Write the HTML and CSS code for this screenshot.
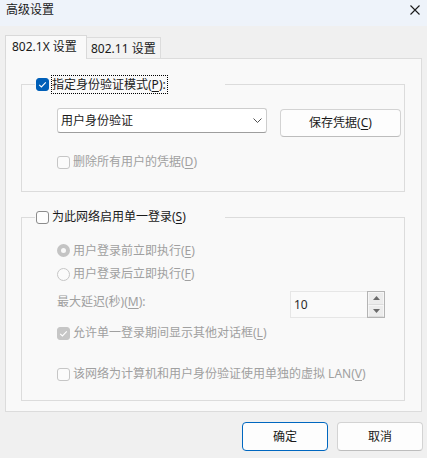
FILE: index.html
```html
<!DOCTYPE html>
<html lang="zh-CN">
<head>
<meta charset="utf-8">
<title>高级设置</title>
<link rel="stylesheet" href="styles.css">
</head>
<body>
<div class="titlebar">
  <span class="title">高级设置</span>
  <svg class="close" width="10" height="10" viewBox="0 0 10 10"><path d="M0.5 0.5L9.5 9.5M9.5 0.5L0.5 9.5" stroke="#1a1a1a" stroke-width="1.1" fill="none"/></svg>
</div>
<div class="body">
  <div class="tabs">
    <div class="tab tab-active">802.1X 设置</div>
    <div class="tab tab-other">802.11 设置</div>
  </div>
  <div class="panel">
    <fieldset class="group group-auth">
      <legend class="legend">
        <span class="cb cb-checked"><svg width="13" height="13" viewBox="0 0 13 13"><path d="M3.2 6.8L5.4 8.9L9.8 4.3" stroke="#fff" stroke-width="1.1" fill="none"/></svg></span>
        <span class="legend-label focus">指定身份验证模式(<u>P</u>):</span>
      </legend>
      <div class="auth-row">
        <div class="select">
          <span>用户身份验证</span>
          <svg width="9" height="5" viewBox="0 0 9 5"><path d="M0.5 0.5L4.5 4.5L8.5 0.5" stroke="#505050" stroke-width="1" fill="none"/></svg>
        </div>
        <div class="btn btn-save">保存凭据(<u>C</u>)</div>
      </div>
      <div class="opt opt-del disabled"><span class="cb cb-dis"></span><span>删除所有用户的凭据(<u>D</u>)</span></div>
    </fieldset>

    <fieldset class="group group-sso">
      <legend class="legend">
        <span class="cb"></span>
        <span class="legend-label plain">为此网络启用单一登录(<u>S</u>)</span>
      </legend>
      <div class="opt opt-r1 disabled"><span class="rb rb-on"></span><span>用户登录前立即执行(<u>E</u>)</span></div>
      <div class="opt opt-r2 disabled"><span class="rb"></span><span>用户登录后立即执行(<u>F</u>)</span></div>
      <div class="delay-row">
        <span class="delay-label disabled">最大延迟(秒)(<u>M</u>):</span>
        <div class="spinbox">
          <div class="spin-input">10</div>
          <div class="spin-btns">
            <div class="spin-btn"><svg width="7" height="4" viewBox="0 0 7 4"><path d="M0 4L3.5 0L7 4Z" fill="#6a6a6a"/></svg></div>
            <div class="spin-btn"><svg width="7" height="4" viewBox="0 0 7 4"><path d="M0 0L3.5 4L7 0Z" fill="#6a6a6a"/></svg></div>
          </div>
        </div>
      </div>
      <div class="opt opt-allow disabled"><span class="cb cb-dis-checked"><svg width="13" height="13" viewBox="0 0 13 13"><path d="M3.2 6.8L5.4 8.9L9.8 4.3" stroke="#fff" stroke-width="1.1" fill="none"/></svg></span><span>允许单一登录期间显示其他对话框(<u>L</u>)</span></div>
      <div class="opt opt-vlan disabled"><span class="cb cb-dis"></span><span>该网络为计算机和用户身份验证使用单独的虚拟 LAN(<u>V</u>)</span></div>
    </fieldset>
  </div>
  <div class="footer">
    <div class="btn btn-ok">确定</div>
    <div class="btn btn-cancel">取消</div>
  </div>
</div>
</body>
</html>
```
FILE: styles.css
```css
* { box-sizing: border-box; }
html, body { margin: 0; padding: 0; }
body {
  width: 427px;
  height: 458px;
  overflow: hidden;
  background: #f0f0f0;
  font-family: "Noto Sans", "Noto Sans CJK SC", sans-serif;
  font-size: 12px;
  line-height: 18px;
  color: #1a1a1a;
}
u { text-decoration: underline; text-underline-offset: 2px; }

.titlebar {
  height: 26px;
  background: #eef3fa;
  display: flex;
  justify-content: space-between;
  align-items: flex-start;
  padding: 0 7px 0 6px;
}
.title { line-height: 20px; }
.close { margin-top: 5px; display: block; }

.body { padding-top: 9px; }

.tabs {
  display: flex;
  align-items: flex-end;
  height: 23px;
  margin-left: 5px;
}
.tab { white-space: nowrap; }
.tab-active {
  width: 82px;
  height: 24px;
  margin-bottom: -1px;
  border: 1px solid #d9d9d9;
  border-bottom: 0;
  background: #f9f9f9;
  padding-left: 6px;
  line-height: 22px;
  position: relative;
  z-index: 1;
}
.tab-other {
  width: 74px;
  height: 21px;
  border-top: 1px solid #dcdcdc;
  border-right: 1px solid #dcdcdc;
  background: #f3f3f3;
  padding-left: 4px;
  line-height: 22px;
}

.panel {
  margin-left: 5px;
  width: 417px;
  border: 1px solid #dcdcdc;
  background: #f9f9f9;
  padding: 16px 16px 10px 15px;
}

.group {
  margin: 0;
  padding: 0;
  min-width: 0;
  border: 1px solid #dcdcdc;
}
.group-auth { padding-bottom: 17px; }
.group-sso { margin-top: 16px; padding-bottom: 14px; }

.legend {
  padding: 0;
  margin-left: 13px;
  width: 190px;
  height: 18px;
  display: flex;
  align-items: center;
}
.legend .cb { margin-left: 1px; }
.legend-label { white-space: nowrap; }
.legend-label.focus {
  margin-left: 2px;
  border: 1px dotted #000;
  height: 19px;
  line-height: 17px;
  padding-right: 1px;
}
.legend-label.plain { margin-left: 3px; }

.cb {
  width: 13px;
  height: 13px;
  flex: none;
  border: 1px solid #8b8b8b;
  border-radius: 3px;
  background: #fdfdfd;
  display: block;
}
.cb svg { display: block; margin: -1px; }
.cb-checked { background: #005fb8; border-color: #005fb8; }
.cb-dis { border-color: #c6c6c6; background: #fbfbfb; }
.cb-dis-checked { background: #c6c6c6; border-color: #c6c6c6; }

.rb {
  width: 13px;
  height: 13px;
  flex: none;
  border-radius: 50%;
  border: 1px solid #c6c6c6;
  background: #fbfbfb;
  display: block;
}
.rb-on {
  background: #f9f9f9;
  border: 4px solid #c4c4c4;
}

.auth-row {
  display: flex;
  align-items: flex-start;
  margin: 15px 0 0 35px;
}
.select {
  width: 210px;
  height: 25px;
  border: 1px solid #cdcdcd;
  border-bottom-color: #9e9e9e;
  border-radius: 3px;
  background: #ffffff;
  display: flex;
  align-items: center;
  justify-content: space-between;
  padding: 0 4px 0 3px;
}
.select svg { display: block; }

.btn {
  border: 1px solid #d3d3d3;
  border-bottom-color: #bdbdbd;
  border-radius: 4px;
  background: #fdfdfd;
  display: flex;
  align-items: center;
  justify-content: center;
  white-space: nowrap;
}
.btn-save {
  width: 121px;
  height: 28px;
  margin: 1px 0 0 13px;
}

.opt {
  display: flex;
  align-items: center;
  gap: 3px;
  height: 24px;
  margin-left: 35px;
  white-space: nowrap;
}
.disabled { color: #a0a0a0; }
.opt-del { margin-top: 13px; }
.opt-r1 { margin-top: 13px; height: 23px; }
.opt-allow { margin-top: 3px; }
.opt-vlan { margin-top: 17px; }

.delay-row {
  display: flex;
  align-items: flex-start;
  justify-content: space-between;
  margin: 5px 19px 0 35px;
  height: 27px;
}
.delay-label { margin-top: 2px; }
.spinbox { display: flex; height: 27px; }
.spin-input {
  width: 77px;
  height: 27px;
  border: 1px solid #e6e6e6;
  border-right: 0;
  background: #fafafa;
  padding-left: 3px;
  line-height: 25px;
  color: #2a2a2a;
}
.spin-btns {
  width: 18px;
  height: 27px;
  border: 1px solid #b4b4b4;
  background: #f0f0f0;
  display: flex;
  flex-direction: column;
}
.spin-btn {
  flex: 1;
  border: 1px solid #f6f6f6;
  border-bottom-color: #dcdcdc;
  background: #ececec;
  display: flex;
  align-items: center;
  justify-content: center;
}
.spin-btn svg { display: block; }

.footer {
  display: flex;
  justify-content: flex-end;
  gap: 9px;
  padding: 10px 4px 0 0;
}
.btn-ok, .btn-cancel { width: 86px; height: 29px; }
.btn-ok { border: 1px solid #0067c0; }
```
